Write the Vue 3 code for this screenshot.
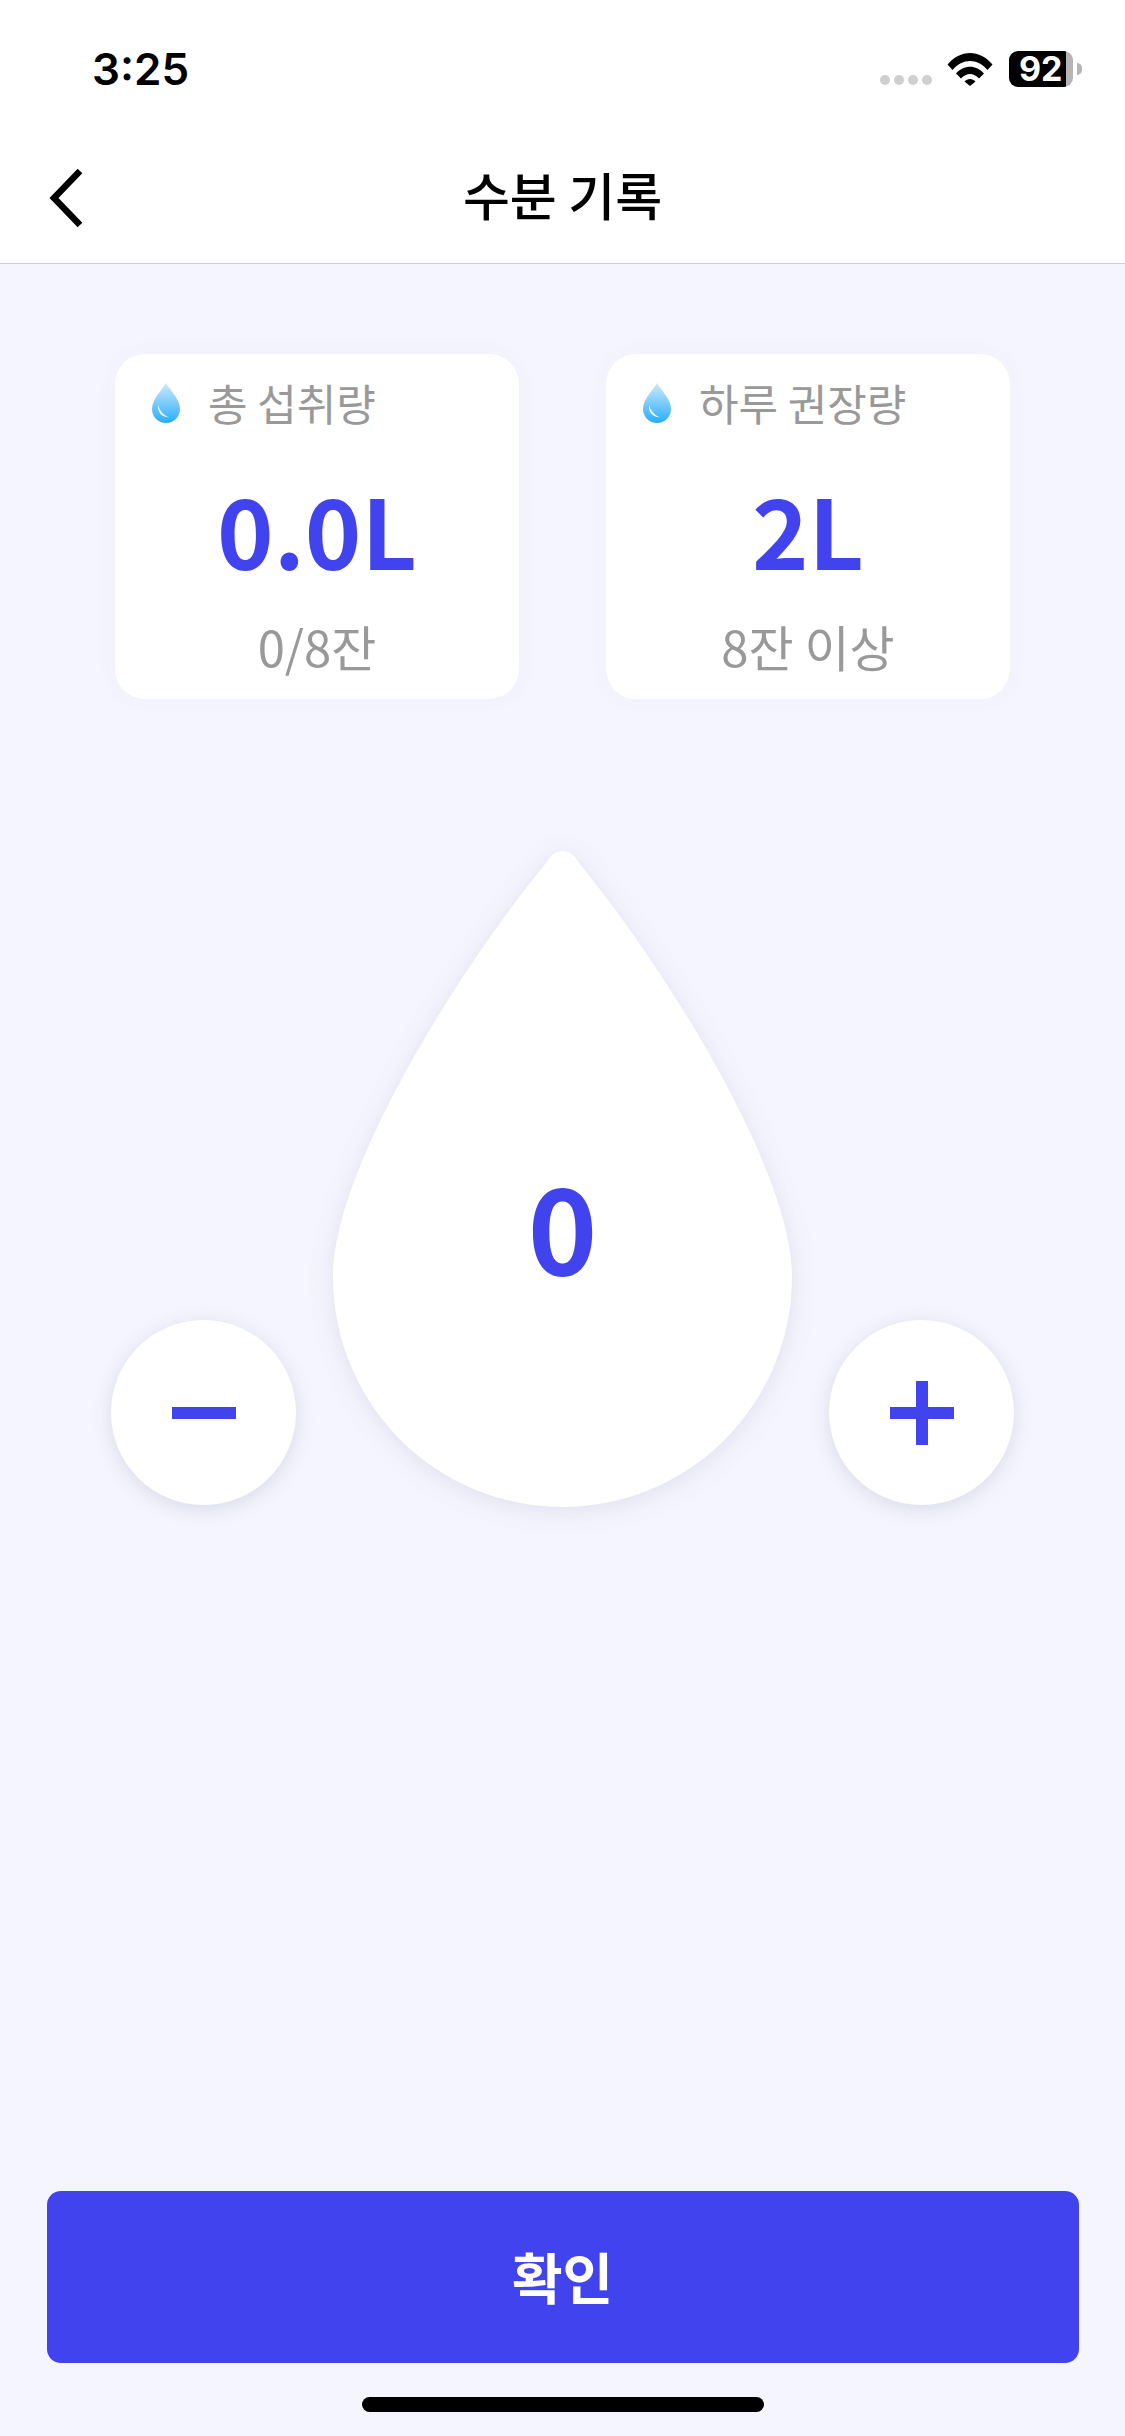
<template>
  <div class="page">
    <div class="status-bar">
      <span class="time">3:25</span>
      <div class="status-right">
        <div class="signal">
          <i v-for="n in 4" :key="n"></i>
        </div>
        <svg class="wifi" width="46" height="34" viewBox="0 0 46 34">
          <path d="M0.500 12.500 C13 -3 33 -3 45.500 12.500 L40.500 18 C30.500 6 15.500 6 5.500 18 Z" fill="#000" />
          <path d="M9 21.500 C16.500 12.500 29.500 12.500 37 21.500 L32 26.500 C26.500 20.500 19.500 20.500 14 26.500 Z" fill="#000" />
          <path d="M17.500 29.500 C20.500 26 25.500 26 28.500 29.500 L23 34 Z" fill="#000" />
        </svg>
        <div class="battery">
          <div class="battery-body"><span>92</span></div>
          <div class="battery-cap"></div>
        </div>
      </div>
    </div>

    <div class="nav">
      <svg class="back" width="36" height="60" viewBox="0 0 36 60">
        <polyline points="32,3 6,30 32,57" fill="none" stroke="#000" stroke-width="6.500" />
      </svg>
      <h1 class="title">수분 기록</h1>
    </div>

    <main class="content">
      <section class="cards">
        <div v-for="card in cards" :key="card.label" class="card">
          <div class="card-label">
            <svg class="drop-icon" width="28" height="40" viewBox="0 0 28 40">
              <defs>
                <linearGradient :id="card.id" x1="0" y1="0" x2="0" y2="1">
                  <stop offset="0" stop-color="#cfe9fb" />
                  <stop offset="1" stop-color="#27aefc" />
                </linearGradient>
              </defs>
              <path d="M14 0 C18 7 28 16 28 26 A14 14 0 0 1 0 26 C0 16 10 7 14 0 Z" :fill="`url(#${card.id})`" />
              <path d="M6 22 C5.500 29 9.500 34 17 34.500 C11 32 8 28 6 22 Z" fill="#fff" />
            </svg>
            <span>{{ card.label }}</span>
          </div>
          <div class="card-value">{{ card.value }}</div>
          <div class="card-sub">{{ card.sub }}</div>
        </div>
      </section>

      <section class="counter">
        <button class="round-btn" aria-label="minus">
          <span class="minus"></span>
        </button>
        <div class="water-drop">
          <svg width="459" height="656" viewBox="0 0 459 656">
            <path d="M229.500 0 C237 0 242 5 246 12 C329 113 459 317 459 426 A229.500 230 0 0 1 0 426 C0 317 130 113 213 12 C217 5 222 0 229.500 0 Z" fill="#fff" />
          </svg>
          <div class="count">{{ count }}</div>
        </div>
        <button class="round-btn" aria-label="plus">
          <span class="plus"></span>
        </button>
      </section>

      <div class="footer">
        <button class="confirm">확인</button>
        <div class="home-bar"></div>
      </div>
    </main>
  </div>
</template>

<script setup>
import { ref } from 'vue'

const count = ref(0)
const cards = [
  { id: 'dropA', label: '총 섭취량', value: '0.0L', sub: '0/8잔' },
  { id: 'dropB', label: '하루 권장량', value: '2L', sub: '8잔 이상' }
]
</script>

<style scoped>
.page {
  width: 1125px;
  height: 2436px;
  display: flex;
  flex-direction: column;
  background: #f4f5fe;
  font-family: "Noto Sans CJK KR", "Noto Sans", sans-serif;
  overflow: hidden;
}

.status-bar {
  height: 100px;
  box-sizing: border-box;
  padding: 40px 43px 0 92px;
  display: flex;
  justify-content: space-between;
  align-items: flex-start;
  background: #fff;
}

.time {
  font-family: Inter, sans-serif;
  font-weight: 600;
  font-size: 44px;
  line-height: 58px;
  color: #000;
}

.status-right {
  display: flex;
  align-items: flex-start;
}

.signal {
  display: flex;
  gap: 4px;
  margin-top: 35px;
  margin-right: 15px;
}

.signal i {
  width: 10px;
  height: 10px;
  border-radius: 50%;
  background: #cfcfcf;
}

.wifi {
  margin-top: 12px;
  margin-right: 16px;
}

.battery {
  display: flex;
  align-items: center;
  margin-top: 11px;
}

.battery-body {
  width: 64px;
  height: 36px;
  box-sizing: border-box;
  border-radius: 9px;
  background: linear-gradient(to right, #000 57px, #b5b5b5 57px);
  color: #fff;
  font-family: Inter, sans-serif;
  font-weight: 700;
  font-size: 34px;
  line-height: 36px;
  padding-left: 10px;
}

.battery-cap {
  width: 5px;
  height: 12px;
  margin-left: 4px;
  border-radius: 0 6px 6px 0;
  background: #b5b5b5;
}

.nav {
  height: 162px;
  border-bottom: 1px solid #cfcfd2;
  background: #fff;
  display: grid;
  grid-template-columns: 1fr auto 1fr;
  align-items: center;
  padding-bottom: 1px;
}

.back {
  margin-left: 48px;
  margin-top: 34px;
}

.title {
  margin: 26px 0 0;
  font-size: 51px;
  font-weight: 500;
  line-height: 70px;
  color: #000;
}

.content {
  flex: 1;
  display: flex;
  flex-direction: column;
}

.cards {
  display: flex;
  justify-content: center;
  gap: 87px;
  padding-top: 90px;
}

.card {
  width: 404px;
  height: 345px;
  box-sizing: border-box;
  border-radius: 30px;
  background: #fff;
  box-shadow: 0 0 24px rgba(90, 100, 220, 0.03);
  padding-top: 23px;
  text-align: center;
}

.card-label {
  display: flex;
  align-items: center;
  gap: 28px;
  height: 50px;
  padding-left: 37px;
  font-size: 43px;
  color: #999;
}

.drop-icon {
  flex: none;
  margin-top: 2px;
}

.card-value {
  margin-top: 52px;
  font-size: 96px;
  line-height: 100px;
  font-weight: 700;
  color: #4143ee;
}

.card-sub {
  margin-top: 37px;
  font-size: 49px;
  line-height: 60px;
  color: #999;
}

.counter {
  display: flex;
  justify-content: center;
  align-items: flex-end;
  gap: 37px;
  margin-top: 152px;
}

.round-btn {
  width: 185px;
  height: 185px;
  margin-bottom: 2px;
  padding: 0;
  border: 0;
  border-radius: 50%;
  background: #fff;
  box-shadow: 0 4px 20px rgba(60, 65, 100, 0.14);
  display: flex;
  align-items: center;
  justify-content: center;
}

.minus {
  width: 64px;
  height: 12px;
  background: #4143ee;
}

.plus {
  width: 64px;
  height: 64px;
  background:
    linear-gradient(#4143ee, #4143ee) center / 64px 12px no-repeat,
    linear-gradient(#4143ee, #4143ee) center / 12px 64px no-repeat;
}

.water-drop {
  display: grid;
  justify-items: center;
  filter: drop-shadow(0 4px 12px rgba(60, 65, 100, 0.11));
}

.water-drop svg {
  grid-area: 1 / 1;
  display: block;
}

.count {
  grid-area: 1 / 1;
  margin-top: 288px;
  font-size: 118px;
  line-height: 170px;
  font-weight: 700;
  color: #4143ee;
}

.footer {
  margin-top: auto;
  display: flex;
  flex-direction: column;
  align-items: center;
  padding-bottom: 24px;
}

.confirm {
  width: 1032px;
  height: 172px;
  padding: 0 0 5px;
  border: 0;
  border-radius: 14px;
  background: #4143ee;
  color: #fff;
  font-family: inherit;
  font-size: 55px;
  font-weight: 700;
}

.home-bar {
  width: 402px;
  height: 15px;
  margin-top: 34px;
  border-radius: 8px;
  background: #000;
}
</style>
